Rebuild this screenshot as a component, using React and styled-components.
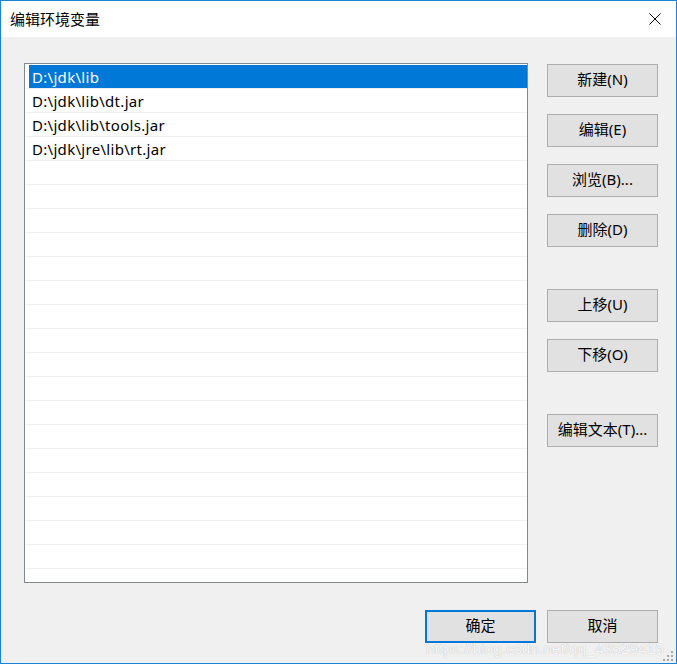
import React from 'react';
import styled, { createGlobalStyle } from 'styled-components';

const GlobalStyle = createGlobalStyle`
  html, body {
    margin: 0;
    padding: 0;
    background: #f0f0f0;
  }
  * {
    box-sizing: border-box;
  }
`;

const FONT = `"Noto Sans", "Noto Sans CJK SC", sans-serif`;

const Window = styled.div`
  position: relative;
  width: 677px;
  height: 664px;
  border: 1px solid #1883d7;
  display: flex;
  flex-direction: column;
  background: #f0f0f0;
  font-family: ${FONT};
  font-size: 15px;
  color: #000;
  overflow: hidden;
`;

const TitleBar = styled.div`
  height: 36px;
  background: #fff;
  display: flex;
  align-items: center;
  justify-content: space-between;
  padding-left: 9px;
`;

const Title = styled.span`
  font-size: 15px;
  line-height: 1;
`;

const CloseIcon = styled.svg`
  width: 12px;
  height: 12px;
  margin-right: 15px;
`;

const Body = styled.div`
  flex: 1;
  display: flex;
  flex-direction: column;
  padding: 26px 18px 20px 23px;
`;

const Main = styled.div`
  display: flex;
  gap: 19px;
`;

const ListBox = styled.div`
  width: 504px;
  height: 520px;
  border: 1px solid #828790;
  background: #fff;
  padding: 1px 0 0 1px;
  overflow: hidden;
`;

const Row = styled.div`
  height: 24px;
  border-bottom: 1px solid #f0f0f0;
  display: flex;
`;

const RowInner = styled.div`
  flex: 1;
  margin-left: 3px;
  padding-left: 3px;
  display: flex;
  align-items: center;
  letter-spacing: 0.3px;
  background: ${p => (p.selected ? '#0078d7' : 'transparent')};
  color: ${p => (p.selected ? '#fff' : '#000')};
  white-space: nowrap;
`;

const Side = styled.div`
  display: flex;
  flex-direction: column;
  padding-top: 1px;
`;

const Button = styled.button`
  width: 111px;
  height: 33px;
  margin-top: ${p => p.gap || 0}px;
  background: #e1e1e1;
  border: ${p => (p.primary ? '2px solid #0078d7' : '1px solid #adadad')};
  font-family: ${FONT};
  font-size: 15px;
  line-height: 1;
  color: #000;
  padding: 0 0 2px;
  display: flex;
  align-items: center;
  justify-content: center;
  white-space: nowrap;
`;

const Footer = styled.div`
  margin-top: auto;
  display: flex;
  justify-content: flex-end;
  gap: 11px;
`;

const Watermark = styled.div`
  position: absolute;
  left: 425px;
  top: 639px;
  font-family: "Liberation Sans", Arial, sans-serif;
  font-size: 15.5px;
  color: #f6f6f6;
  text-shadow: 0 0 1px #b0b0b0;
  white-space: nowrap;
  pointer-events: none;
`;

const Grip = styled.svg`
  position: absolute;
  right: 2px;
  bottom: 1px;
  width: 11px;
  height: 11px;
`;

const paths = [
  'D:\\jdk\\lib',
  'D:\\jdk\\lib\\dt.jar',
  'D:\\jdk\\lib\\tools.jar',
  'D:\\jdk\\jre\\lib\\rt.jar',
];

const rows = Array.from({ length: 22 }, (_, i) => paths[i] || '');

const App = () => (
  <>
    <GlobalStyle />
    <Window>
      <TitleBar>
        <Title>编辑环境变量</Title>
        <CloseIcon viewBox="0 0 12 12">
          <path d="M0.5 0.5 L11.5 11.5 M11.5 0.5 L0.5 11.5" stroke="#000" strokeWidth="1" fill="none" />
        </CloseIcon>
      </TitleBar>
      <Body>
        <Main>
          <ListBox>
            {rows.map((text, i) => (
              <Row key={i}>
                <RowInner selected={i === 0}>{text}</RowInner>
              </Row>
            ))}
          </ListBox>
          <Side>
            <Button>新建(N)</Button>
            <Button gap={17}>编辑(E)</Button>
            <Button gap={17}>浏览(B)...</Button>
            <Button gap={17}>删除(D)</Button>
            <Button gap={42}>上移(U)</Button>
            <Button gap={17}>下移(O)</Button>
            <Button gap={42}>编辑文本(T)...</Button>
          </Side>
        </Main>
        <Footer>
          <Button primary>确定</Button>
          <Button>取消</Button>
        </Footer>
      </Body>
      <Watermark>https://blog.csdn.net/qq_43529415</Watermark>
      <Grip viewBox="0 0 11 11">
        <g fill="#a8a8a8">
          <rect x="8" y="0" width="2" height="2" />
          <rect x="4" y="4" width="2" height="2" />
          <rect x="8" y="4" width="2" height="2" />
          <rect x="0" y="8" width="2" height="2" />
          <rect x="4" y="8" width="2" height="2" />
          <rect x="8" y="8" width="2" height="2" />
        </g>
      </Grip>
    </Window>
  </>
);

export default App;
